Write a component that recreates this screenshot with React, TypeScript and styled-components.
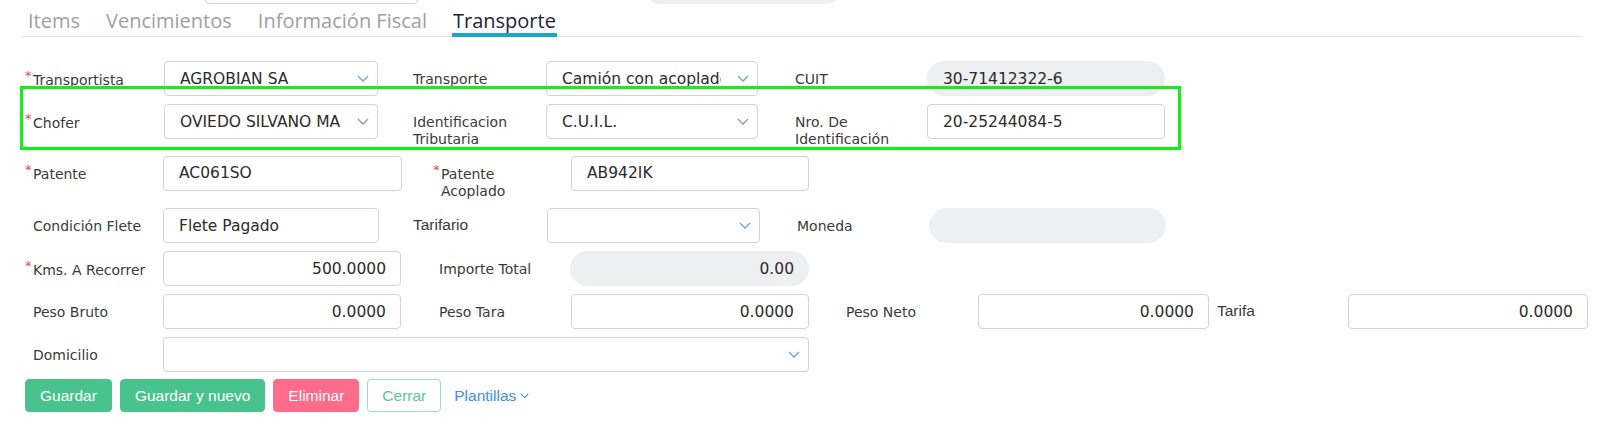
import styled, { createGlobalStyle } from "styled-components";

const GlobalStyle = createGlobalStyle`
  body {
    margin: 0;
    background: #ffffff;
    font-family: "DejaVu Sans", Verdana, sans-serif;
  }
`;

const Page = styled.div`
  padding: 0 18px 0 22px;
  overflow: hidden;
  height: 421px;
`;

const TopStrip = styled.div`
  display: flex;
  height: 35px;
  margin-top: -31px;
`;

const TopBox = styled.div<{ $left: number; $width: number; $gray?: boolean }>`
  margin-left: ${(p) => p.$left}px;
  width: ${(p) => p.$width}px;
  box-sizing: border-box;
  border: 1px solid ${(p) => (p.$gray ? "transparent" : "#d3d3d3")};
  border-radius: ${(p) => (p.$gray ? "18px" : "4px")};
  background: ${(p) => (p.$gray ? "#eeeff1" : "#fff")};
`;

const TabBar = styled.div`
  display: flex;
  gap: 24px;
  padding-left: 5px;
  border-bottom: 1px solid #e4e4e4;
`;

const Tab = styled.div<{ $active?: boolean }>`
  padding: 5px 1px 0;
  line-height: 24px;
  font-family: "Open Sans", sans-serif;
  font-size: 20px;
  color: ${(p) => (p.$active ? "#22223a" : "#a0a0a0")};
  border-bottom: 4px solid ${(p) => (p.$active ? "#1ba7cc" : "transparent")};
  margin-bottom: -1px;
`;

const Form = styled.div`
  display: flex;
  flex-direction: column;
  gap: 8px;
  margin-top: 24px;
`;

const Row = styled.div`
  position: relative;
  display: flex;
  align-items: flex-start;
  padding-left: 11px;
`;

const Highlight = styled.div`
  position: absolute;
  left: -2px;
  top: -18px;
  width: 1161px;
  height: 64px;
  box-sizing: border-box;
  border: 3px solid #14f014;
  pointer-events: none;
`;

const Field = styled.div<{ $gap?: number }>`
  display: flex;
  align-items: flex-start;
  margin-left: ${(p) => p.$gap || 0}px;
`;

const Label = styled.div<{ $w: number; $alt?: boolean }>`
  width: ${(p) => p.$w}px;
  box-sizing: border-box;
  padding: ${(p) => (p.$alt ? "8px" : "9.5px")} ${(p) => p.$w - 118}px 0 0;
  font-size: ${(p) => (p.$alt ? "15.5px" : "14px")};
  font-family: ${(p) =>
    p.$alt ? `"Liberation Sans", Arial, sans-serif` : `"DejaVu Sans", Verdana, sans-serif`};
  line-height: 17px;
  color: #3a3a3a;
`;

const Star = styled.span`
  display: inline-block;
  width: 8px;
  margin-left: -8px;
  color: #e5484d;
  font-size: 13px;
  vertical-align: 5px;
  line-height: 10px;
`;

const Control = styled.div<{ $w: number; $right?: boolean; $readonly?: boolean }>`
  width: ${(p) => p.$w}px;
  height: 35px;
  box-sizing: border-box;
  display: flex;
  align-items: center;
  justify-content: ${(p) => (p.$right ? "flex-end" : "flex-start")};
  padding: 0 14px 0 15px;
  border: 1px solid ${(p) => (p.$readonly ? "transparent" : "#d3d3d3")};
  border-radius: ${(p) => (p.$readonly ? "18px" : "4px")};
  background: ${(p) => (p.$readonly ? "#eeeff1" : "#ffffff")};
  font-size: 15.5px;
  color: #2b2b2b;
  white-space: nowrap;
`;

const SelectBox = styled(Control)`
  padding-right: 8px;
`;

const SelectValue = styled.span`
  flex: 1;
  overflow: hidden;
  margin-right: 16px;
`;

const Actions = styled.div`
  display: flex;
  align-items: center;
  gap: 8px;
  margin-top: 7px;
  padding-left: 3px;
`;

const Button = styled.button<{ $bg: string }>`
  height: 33px;
  padding: 0 14px;
  border: 1px solid ${(p) => p.$bg};
  border-radius: 4px;
  background: ${(p) => p.$bg};
  color: #ffffff;
  font-family: "Liberation Sans", Arial, sans-serif;
  font-size: 15.5px;
`;

const OutlineButton = styled(Button)`
  background: #ffffff;
  border-color: #9fdcbf;
  color: #5cc796;
`;

const LinkButton = styled.span`
  display: flex;
  align-items: center;
  gap: 4px;
  margin-left: 5px;
  color: #3d8fe8;
  font-family: "Liberation Sans", Arial, sans-serif;
  font-size: 15.5px;
`;

const Chevron = ({ color = "#7fa0d6", w = 12 }: { color?: string; w?: number }) => (
  <svg width={w} height={w * 0.6} viewBox="0 0 12 7" fill="none">
    <polyline points="1,1 6,6 11,1" stroke={color} strokeWidth="1.4" />
  </svg>
);

type FieldProps = {
  label: string;
  lw: number;
  cw: number;
  gap?: number;
  required?: boolean;
  alt?: boolean;
  kind?: "input" | "select" | "readonly";
  value?: string;
  right?: boolean;
};

const FormField = ({ label, lw, cw, gap, required, alt, kind = "input", value = "", right }: FieldProps) => (
  <Field $gap={gap}>
    <Label $w={lw} $alt={alt}>
      {required && <Star>*</Star>}
      {label}
    </Label>
    {kind === "select" ? (
      <SelectBox $w={cw}>
        <SelectValue>{value}</SelectValue>
        <Chevron />
      </SelectBox>
    ) : (
      <Control $w={cw} $right={right} $readonly={kind === "readonly"}>
        {value}
      </Control>
    )}
  </Field>
);

export default function App() {
  return (
    <>
      <GlobalStyle />
      <Page>
        <TopStrip>
          <TopBox $left={183} $width={213} />
          <TopBox $left={225} $width={200} $gray />
        </TopStrip>
        <TabBar>
          <Tab>Items</Tab>
          <Tab>Vencimientos</Tab>
          <Tab>Información Fiscal</Tab>
          <Tab $active>Transporte</Tab>
        </TabBar>
        <Form>
          <Row>
            <FormField label="Transportista" required lw={131} cw={214} kind="select" value="AGROBIAN SA" />
            <FormField label="Transporte" lw={133} cw={212} gap={35} kind="select" value="Camión con acoplado" />
            <FormField label="CUIT" lw={132} cw={238} gap={37} kind="readonly" value="30-71412322-6" />
          </Row>
          <Row>
            <FormField label="Chofer" required lw={131} cw={214} kind="select" value="OVIEDO SILVANO MARTIN" />
            <FormField label="Identificacion Tributaria" lw={133} cw={212} gap={35} kind="select" value="C.U.I.L." />
            <FormField label="Nro. De Identificación" lw={132} cw={238} gap={37} value="20-25244084-5" />
            <Highlight />
          </Row>
          <Row>
            <FormField label="Patente" required lw={130} cw={239} value="AC061SO" />
            <FormField label="Patente Acoplado" required lw={130} cw={238} gap={39} value="AB942IK" />
          </Row>
          <Row>
            <FormField label="Condición Flete" lw={130} cw={216} value="Flete Pagado" />
            <FormField label="Tarifario" alt lw={134} cw={213} gap={34} kind="select" />
            <FormField label="Moneda" lw={132} cw={237} gap={37} kind="readonly" />
          </Row>
          <Row>
            <FormField label="Kms. A Recorrer" required lw={130} cw={238} value="500.0000" right />
            <FormField label="Importe Total" lw={131} cw={239} gap={38} kind="readonly" value="0.00" right />
          </Row>
          <Row>
            <FormField label="Peso Bruto" lw={130} cw={238} value="0.0000" right />
            <FormField label="Peso Tara" lw={132} cw={238} gap={38} value="0.0000" right />
            <FormField label="Peso Neto" lw={132} cw={231} gap={37} value="0.0000" right />
            <FormField label="Tarifa" alt lw={131} cw={240} gap={8} value="0.0000" right />
          </Row>
          <Row>
            <FormField label="Domicilio" lw={130} cw={646} kind="select" />
          </Row>
        </Form>
        <Actions>
          <Button $bg="#48c38e">Guardar</Button>
          <Button $bg="#48c38e">Guardar y nuevo</Button>
          <Button $bg="#fe6b8b">Eliminar</Button>
          <OutlineButton $bg="#ffffff">Cerrar</OutlineButton>
          <LinkButton>
            Plantillas
            <Chevron color="#3d8fe8" w={9} />
          </LinkButton>
        </Actions>
      </Page>
    </>
  );
}
